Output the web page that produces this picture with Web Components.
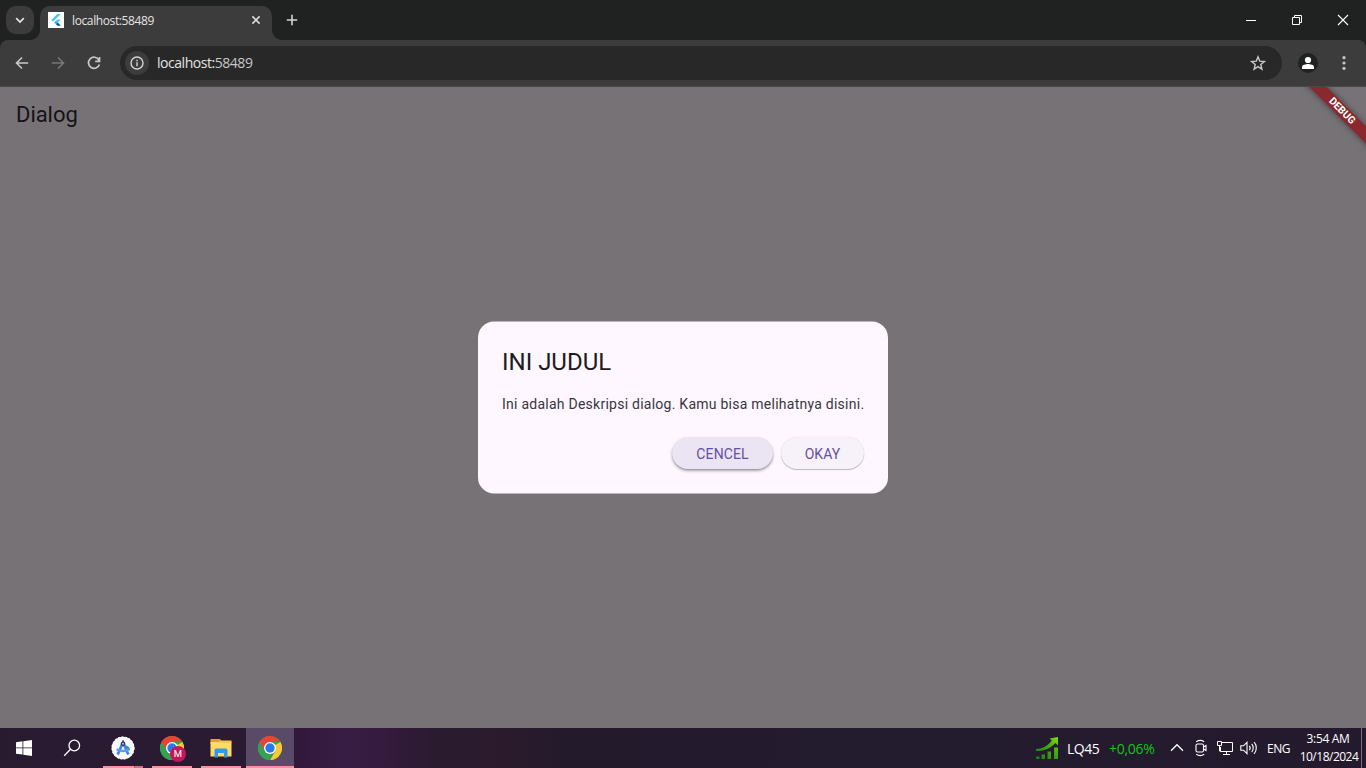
<!DOCTYPE html>
<html lang="en">
<head>
<meta charset="utf-8">
<title>localhost:58489</title>
<style>
html,body{margin:0;height:100%;overflow:hidden;background:#777275;font-family:"Open Sans","Noto Sans",sans-serif}
</style>
</head>
<body>
<desktop-screen></desktop-screen>
<script>
const define = (name, html) => customElements.define(name, class extends HTMLElement {
  constructor() {
    super();
    const t = document.createElement('template');
    t.innerHTML = html;
    this.attachShadow({mode: 'open'}).append(t.content.cloneNode(true));
  }
});

define('tab-strip', `
<style>
:host{display:flex;height:40px;background:#1f2221;color:#e3e3e3;box-sizing:border-box;padding-left:6px}
svg{display:block;flex:none}
.search{width:28px;height:28px;margin-top:6px;border-radius:10px;background:#3c3c3c;display:grid;place-items:center}
.tab{position:relative;margin:6px 0 0 6px;width:232px;height:34px;box-sizing:border-box;padding:0 10px 6px 8px;border-radius:10px 10px 0 0;background:#3c3c3c;display:flex;align-items:center}
.tab:before,.tab:after{content:"";position:absolute;bottom:0;width:10px;height:10px}
.tab:before{left:-10px;background:radial-gradient(circle at 0 0,transparent 9.6px,#3c3c3c 10.2px)}
.tab:after{right:-10px;background:radial-gradient(circle at 100% 0,transparent 9.6px,#3c3c3c 10.2px)}
.label{flex:1;margin-left:8px;padding-top:1px;font-size:12px;line-height:17px;letter-spacing:-.38px}
.plus{margin:14px 0 0 14px}
.win{margin-left:auto;display:flex}
.win svg{width:46px;height:40px}
</style>
<div class="search"><svg width="12" height="12" viewBox="0 0 12 12" fill="none" stroke="#e3e3e3" stroke-width="1.7"><path d="M2.2 4.2 6 8l3.8-3.8"/></svg></div>
<div class="tab">
<svg width="16" height="16" viewBox="0 0 16 16"><path fill="#fff" d="M0 0h16v16H0z"/><path fill="#47c5fb" d="M9.3 2h3.6L5.2 9.6 3.4 7.9z"/><path fill="#47c5fb" d="M9.3 7.4h3.6L9.8 10.5 8 8.7z"/><path fill="#2aa8f0" d="m6.2 10.5 1.8-1.8 1.8 1.8L8 12.3z"/><path fill="#00569e" d="m8 12.3 1.8-1.8 3.1 3.3H9.4z"/></svg>
<span class="label">localhost:58489</span>
<svg width="12" height="12" viewBox="0 0 12 12" stroke="#e3e3e3" stroke-width="1.5"><path d="m2.4 2.4 7.2 7.2M9.6 2.4 2.4 9.6"/></svg>
</div>
<svg class="plus" width="12" height="12" viewBox="0 0 12 12" stroke="#d5d5d5" stroke-width="1.6"><path d="M6 .8v10.4M.8 6h10.4"/></svg>
<div class="win">
<svg viewBox="0 0 46 40" stroke="#fff" fill="none"><path d="M18 20.5h10"/></svg>
<svg viewBox="0 0 46 40" stroke="#fff" fill="none"><path d="M18.5 17.5h7v7h-7zM20.5 17.5v-2h7v7h-2"/></svg>
<svg viewBox="0 0 46 40" stroke="#fff" fill="none" stroke-width="1.1"><path d="m18 15 10 10M28 15 18 25"/></svg>
</div>`);

define('tool-bar', `
<style>
:host{display:block;background:#1f2221;height:47px}
.bar{height:47px;box-sizing:border-box;border-bottom:1px solid #4a494a;background:#3c3c3c;border-radius:8px 8px 0 0;display:flex;align-items:center;padding:0 12px 0 12px}
svg{display:block;flex:none}
.nav{display:flex;gap:16px;width:108px}
.omni{flex:none;width:1162px;height:34px;border-radius:17px;background:#282828;display:flex;align-items:center;box-sizing:border-box;padding:0 14px 0 5px}
.info{width:24px;height:24px;border-radius:12px;background:#3c3c3c;display:grid;place-items:center}
.url{flex:1;margin-left:8px;font-size:14px;line-height:20px;letter-spacing:-.46px;color:#e3e3e3}
.url span{color:#c7c7c7}
.me{margin-left:16px}
.dots{margin-left:16px}
</style>
<div class="bar">
<div class="nav">
<svg width="20" height="20" viewBox="0 0 20 20" fill="none" stroke="#c9c9c9" stroke-width="1.6"><path d="M16.2 10H5M10 4.5 4.5 10l5.500 5.500"/></svg>
<svg width="20" height="20" viewBox="0 0 20 20" fill="none" stroke="#777" stroke-width="1.600"><path d="M3.800 10H15M10 4.500 15.500 10 10 15.500"/></svg>
<svg width="20" height="20" viewBox="0 0 20 20" fill="none" stroke="#c9c9c9" stroke-width="1.700"><path d="M14.900 7A5.600 5.600 0 1 0 15.400 11.500M15.500 4v4.300h-4.300"/></svg>
</div>
<div class="omni">
<div class="info"><svg width="14" height="14" viewBox="0 0 14 14" fill="none" stroke="#d4d4d4" stroke-width="1.400"><circle cx="7" cy="7" r="6"/><path d="M7 6.200v4M7 3.700v1.500"/></svg></div>
<div class="url">localhost:<span>58489</span></div>
<svg width="20" height="20" viewBox="0 0 20 20" fill="none" stroke="#c7c7c7" stroke-width="1.400"><path d="m10 3.800 1.700 4.300 4.700.4-3.600 3 1.100 4.600-3.900-2.500-3.900 2.500 1.100-4.600-3.600-3 4.700-.4z"/></svg>
</div>
<svg class="me" width="20" height="20" viewBox="0 0 20 20"><circle cx="10" cy="10" r="10" fill="#1f2221"/><circle cx="10" cy="7" r="3.100" fill="#fff"/><path fill="#fff" d="M4 16v-2c0-2 4-2.900 6-2.900s6 .9 6 2.900v2z"/></svg>
<svg class="dots" width="20" height="20" viewBox="0 0 20 20" fill="#c7c7c7"><circle cx="10" cy="4.700" r="1.600"/><circle cx="10" cy="10" r="1.600"/><circle cx="10" cy="15.300" r="1.600"/></svg>
</div>`);

define('pill-button', `
<style>
:host{display:flex;align-items:center;justify-content:center;box-sizing:border-box;height:32px;padding-top:1px;border-radius:16px;width:var(--w);background:#f7f2fa;color:#6550a4;font:400 14px/20px Roboto,sans-serif;letter-spacing:.1px;box-shadow:0 1px 1px rgba(0,0,0,.25),0 0 1px rgba(0,0,0,.16)}
:host([hovered]){background:#ebe5f3;box-shadow:0 2px 3px rgba(0,0,0,.32),0 1px 1px rgba(0,0,0,.12)}
</style><slot></slot>`);

define('alert-dialog', `
<style>
:host{display:block;position:relative;isolation:isolate;box-sizing:border-box;width:410px;height:172px;padding:24.500px 24px 24px;font-family:Roboto,sans-serif}
:host:before{content:"";position:absolute;inset:0;z-index:-1;border-radius:16px;background:#fef7ff;transform:translateY(-.5px)}
h1{margin:0;font-weight:400;font-size:24px;line-height:32px;color:#1d1b20}
.body{margin-top:16px;font-size:14px;line-height:20px;letter-spacing:.25px;color:#39363d;white-space:nowrap}
.actions{margin-top:23px;display:flex;gap:8px;justify-content:flex-end}
</style>
<svg width="0" height="0" style="display:none"></svg>
<div class="surface"></div>
<h1><slot name="title"></slot></h1>
<div class="body"><slot></slot></div>
<div class="actions"><slot name="actions"></slot></div>
<style>
.surface{position:absolute;inset:0;z-index:-1;border-radius:16px;background:#fef7ff;transform:translateY(-.5px)}
:host:before{display:none}
</style>`);

define('debug-banner', `
<style>
:host{position:absolute;width:120px;height:12px;right:-36px;top:18px;transform:rotate(45deg);background:#8b282d;box-shadow:0 0 6px rgba(0,0,0,.5);color:#fff;text-align:center;font:700 10.200px/12px Roboto,sans-serif}
</style>DEBUG`);

define('app-page', `
<style>
:host{display:grid;place-items:center;position:relative;height:641px;overflow:hidden;background:#777275}
header{grid-area:1/1;place-self:start;padding:14px 16px;font:400 22px/28px Roboto,sans-serif;letter-spacing:-.05px;color:#151316}
alert-dialog{grid-area:1/1}
</style>
<header>Dialog</header>
<alert-dialog><span slot="title">INI JUDUL</span>Ini adalah Deskripsi dialog. Kamu bisa melihatnya disini.
<pill-button slot="actions" hovered style="--w:101px">CENCEL</pill-button><pill-button slot="actions" style="--w:83px">OKAY</pill-button></alert-dialog>
<debug-banner></debug-banner>`);

define('task-item', `
<style>
:host{display:flex;flex-direction:column;align-items:center;justify-content:center;position:relative;box-sizing:border-box;width:49px;height:40px}
:host([open]){padding-right:1px}
:host([open]):after{content:"";position:absolute;left:4px;right:5px;bottom:0;height:2px;background:#fb929a}
:host([stacked]):after{background:linear-gradient(90deg,#fb929a 31px,#a7646f 31px 32px,#c97680 32px)}
:host([active]){width:48px;padding:0;background:#5a4967}
:host([active]):after{left:0;right:0}
</style><slot></slot>`);

define('chrome-logo', `
<style>:host,svg{display:block}</style>
<svg width="24" height="24" viewBox="0 0 24 24"><circle cx="12" cy="12" r="12" fill="#34a250"/><path fill="#fcc934" d="M12 12 22.400 6A12 12 0 0 1 12 24l5.200-9z"/><path fill="#ea4335" d="M1.600 6A12 12 0 0 1 22.400 6H12l-5.200 9z"/><path fill="#34a250" d="M1.600 6 6.800 15 12 18l5.200-3L12 24A12 12 0 0 1 1.600 6z"/><circle cx="12" cy="12" r="6" fill="#fff"/><circle cx="12" cy="12" r="4.700" fill="#267be9"/></svg>`);

define('task-bar', `
<style>
:host{display:flex;height:40px;color:#fff;background:linear-gradient(90deg,#281b30 0,#2b1a32 250px,#32193c 300px,#371d43 350px,#341a3d 385px,#2a1b2f 435px,#2b1a2c 500px,#231a2c 570px,#231b2e 880px,#241a2d 100%)}
svg{display:block;flex:none}
.start{width:48px}
.badged{position:relative}
.m{position:absolute;left:10px;top:10px;width:16px;height:16px;border-radius:8px;background:#c2185b;font:400 9.500px/16px Roboto,sans-serif;text-align:center}
.tray{margin-left:auto;display:flex;align-items:center;white-space:nowrap}
.lq{font-size:14px;letter-spacing:-.5px;width:33px;margin-left:8px;padding-top:1px}
.pc{font-size:14px;letter-spacing:-.3px;color:#13c413;width:46px;margin-left:9px;padding-top:1px}
.lang{font-size:12px;letter-spacing:-.45px;width:24px;margin-left:9px}
.clock{width:60px;margin-left:8px;font-size:12px;line-height:18px;text-align:center;letter-spacing:-.5px;padding-bottom:1px}
.time{letter-spacing:-.35px;padding-right:2px}
.show{border-left:1px solid #777080;height:40px;width:4px;margin-left:2px}
</style>
<task-item class="start"><svg width="16" height="16" viewBox="0 0 16 16" fill="#fff"><path d="M0 2.200 6.500 1.300v6.200H0zM7.300 1.200 16 0v7.500H7.300zM0 8.300h6.500v6.300L0 13.700zM7.300 8.300H16V16l-8.700-1.300z"/></svg></task-item>
<task-item class="start"><svg width="18" height="18" viewBox="0 0 18 18" fill="none" stroke="#fff" stroke-width="1.300"><circle cx="11.300" cy="6.500" r="5.300"/><path d="M7.500 10.300 1.200 16.700"/></svg></task-item>
<task-item open stacked style="margin-left:3px"><svg width="24" height="24" viewBox="0 0 24 24"><circle cx="12" cy="12" r="11.300" fill="#f7f9fb"/><circle cx="12" cy="12" r="10.800" fill="none" stroke="#fff" stroke-width="1.500" stroke-dasharray="2 1.500"/><path fill="#31a853" d="M14 9.500c3 0 5 1.500 5 4.500h-4z"/><path fill="none" stroke="#3b82f0" stroke-width="2.700" d="M11.300 8 6.700 18.500M12.800 8 17.300 18.500"/><path fill="none" stroke="#5d9bef" stroke-width="2.500" d="M5.700 13.200c3.200 2.400 9.500 2.400 12.300 0"/><circle cx="12" cy="7.800" r="1.700" fill="#a8c7fa" stroke="#263c55" stroke-width="1.300"/><path fill="#263c55" d="M11.300 4.300h1.500v2.500h-1.500z"/></svg></task-item>
<task-item open><div class="badged"><chrome-logo></chrome-logo><span class="m">M</span></div></task-item>
<task-item open><svg width="22" height="20" viewBox="0 0 22 20"><path fill="#e4a51a" d="M.5 1h9.500l1.500 2v3H.5z"/><path fill="#ffda67" d="M.5 4H21.500v14.500H.5z"/><path fill="#f5ca4d" d="M10 2.500h11.500V5H9z"/><path fill="#2f9be5" d="M4.500 19.500v-7a2 2 0 0 1 2-2h9a2 2 0 0 1 2 2v7H14v-4.500H8v4.500z"/></svg></task-item>
<task-item open active><chrome-logo></chrome-logo></task-item>
<div class="tray">
<svg width="24" height="24" viewBox="0 0 24 24"><defs><linearGradient id="g" x1="0" y1="1" x2="1" y2="0"><stop stop-color="#14781b"/><stop offset=".6" stop-color="#46aa0b"/><stop offset="1" stop-color="#86dc00"/></linearGradient></defs><path fill="url(#g)" d="M1 13c6.500 0 11.500-3 15.800-8.500L14.500 2.500 23 1v8.500l-2.700-2.400C15 13 8.500 15.500 1 15zM1 20.500h3.500V23H1zM6.500 18.500H10V23H6.500zM12.500 15.500H16V23h-3.500zM19 11.500h4V23h-4z"/></svg>
<span class="lq">LQ45</span><span class="pc">+0,06%</span>
<svg style="margin-left:15px" width="14" height="10" viewBox="0 0 14 10" fill="none" stroke="#fff" stroke-width="1.300"><path d="m1 7.700 6-6 6 6"/></svg>
<svg style="margin-left:9px" width="16" height="18" viewBox="0 0 16 18" fill="none" stroke="#fff" stroke-width="1.100"><rect x="3" y="5" width="7.500" height="8" rx="1.500"/><path d="m10.500 8 2.500-1.500v5l-2.500-1.500M3.300 2.700C5.500 1.200 9 1.200 11.200 2.700M3.300 15.300c2.200 1.500 5.700 1.500 7.900 0"/></svg>
<svg style="margin-left:7px" width="17" height="16" viewBox="0 0 17 16" fill="none" stroke="#fff"><path d="M6 2.500h10.500v9H4.500V7M10.500 11.500v3M7 14.500h7M1.500 1.500h4v4h-4zM3.500 5.500v5.500h1"/></svg>
<svg style="margin-left:7px" width="18" height="16" viewBox="0 0 18 16" fill="none" stroke="#fff" stroke-width="1.100"><path d="M.8 5.800h2.700L7 2.300v11.400l-3.500-3.500H.8zM9.300 5.800c1 1.200 1 3.200 0 4.400M11.700 3.900c2 2.200 2 6 0 8.200M14.100 2.200c2.900 3 2.900 8.600 0 11.600"/></svg>
<span class="lang">ENG</span>
<div class="clock"><span class="time">3:54 AM</span><br>10/18/2024</div><div class="show"></div>
</div>`);

define('desktop-screen', `
<style>:host{display:flex;flex-direction:column;width:1366px;height:768px;overflow:hidden}</style>
<tab-strip></tab-strip><tool-bar></tool-bar><app-page></app-page><task-bar></task-bar>`);
</script>
</body>
</html>
